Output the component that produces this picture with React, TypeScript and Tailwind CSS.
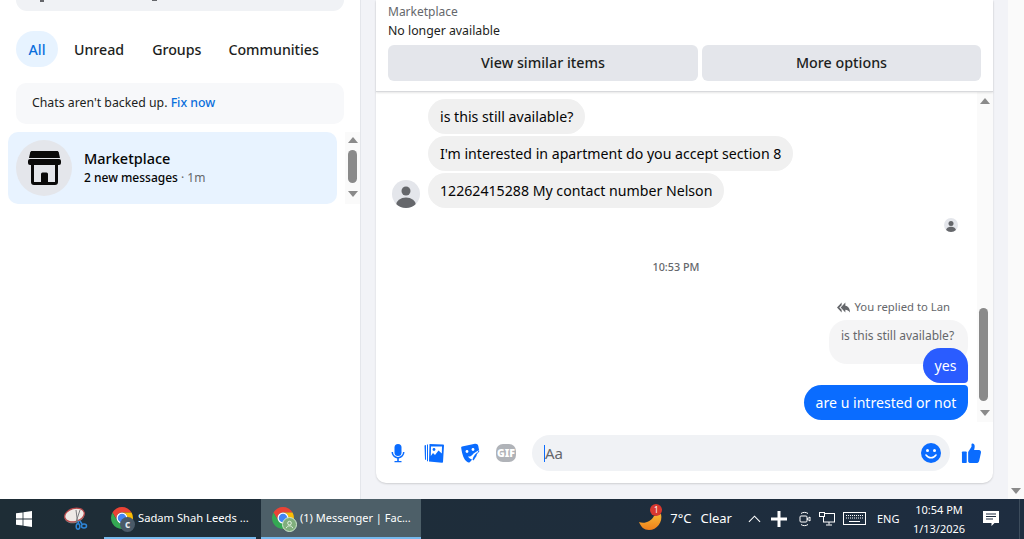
const FONT = "font-['Noto_Sans','Open_Sans',sans-serif]";

function ChromeIcon({ badge }: { badge: 'c' | 'user' }) {
  return (
    <div className="relative w-6 h-6 shrink-0">
      <svg viewBox="0 0 48 48" className="w-6 h-6">
        <path d="M43.050 13A22 22 0 0 0 4.950 13L14.500 29.500A11 11 0 0 1 24 13z" fill="#ea4335" />
        <path d="M24 46A22 22 0 0 0 43.050 13L24 13A11 11 0 0 1 33.500 29.500z" fill="#fbbc04" />
        <path d="M4.950 13A22 22 0 0 0 24 46L33.500 29.500A11 11 0 0 1 14.500 29.500z" fill="#34a853" />
        <circle cx="24" cy="24" r="11" fill="#fff" />
        <circle cx="24" cy="24" r="8.500" fill="#4285f4" />
      </svg>
      {badge === 'c' ? (
        <div className="absolute -right-[1px] -bottom-[2px] w-[15px] h-[15px] rounded-full bg-[#4a5a68] text-[10px] leading-[14px] text-center font-bold text-[#e6eaee]">
          c
        </div>
      ) : (
        <div className="absolute -right-[2px] -bottom-[2px] w-[15px] h-[15px] rounded-full bg-[#7fae7c] border border-[#cfe8cd] flex items-center justify-center">
          <svg viewBox="0 0 12 12" className="w-[11px] h-[11px]" fill="none" stroke="#eaf5e9" strokeWidth="1">
            <circle cx="6" cy="4.500" r="2" />
            <path d="M2.500 10c.5-2 2-2.500 3.500-2.500s3 .5 3.500 2.500" />
          </svg>
        </div>
      )}
    </div>
  );
}

function Arrow({ dir }: { dir: 'up' | 'down' }) {
  return (
    <svg viewBox="0 0 10 6" className="w-[10px] h-[6px] shrink-0" fill="#8a8a8a">
      {dir === 'up' ? <path d="M5 0l5 6H0z" /> : <path d="M0 0h10L5 6z" />}
    </svg>
  );
}

function StoreIcon() {
  return (
    <svg viewBox="0 0 33 34" className="w-[33px] h-[34px]" fill="#0a0a0a">
      <path d="M4 0h25c1 0 1.500.6 1.800 1.500L32 7H1l1.200-5.500C2.500.6 3 0 4 0z" />
      <rect x="0" y="8" width="33" height="6" rx="2" />
      <path d="M3 13h3v18h7v-8a1.500 1.500 0 0 1 1.500-1.500h4A1.500 1.500 0 0 1 20 23v8h7V13h3v18a3 3 0 0 1-3 3H6a3 3 0 0 1-3-3z" />
    </svg>
  );
}

function Sidebar() {
  return (
    <div className="w-[361px] shrink-0 bg-white border-r border-[#e4e6eb] flex flex-col">
      <div className="mx-4 w-[328px] h-[11px] bg-[#f0f2f5] rounded-b-[14px] shrink-0 flex items-start">
        <div className="ml-[24px] w-[4px] h-[2px] bg-[#65676b]" />
        <div className="ml-[108px] w-[5px] h-[1px] bg-[#65676b]" />
      </div>
      <div className="flex items-center px-4 mt-5 text-[14.200px] font-medium text-[#1c1e21]">
        <div className="w-[42px] h-9 pt-px rounded-[18px] bg-[#e7f3ff] text-[#0a6fdc] flex items-center justify-center">All</div>
        <div className="ml-4 pt-0.5">Unread</div>
        <div className="ml-7 pt-0.5">Groups</div>
        <div className="ml-[27px] pt-0.5">Communities</div>
      </div>
      <div className="mx-4 w-[328px] h-[41px] mt-4 bg-[#f7f8fa] rounded-[10px] px-4 flex items-center text-[12.300px] text-[#1c1e21]">
        Chats aren't backed up.&nbsp;<span className="text-[#0a6fdc] font-medium">Fix now</span>
      </div>
      <div className="flex mt-2 ml-2">
        <div className="w-[329px] h-[72px] rounded-[10px] bg-[#e8f3ff] flex items-center pl-2">
          <div className="w-14 h-14 rounded-full bg-[#e4e6eb] flex items-center justify-center">
            <StoreIcon />
          </div>
          <div className="ml-3 -mt-0.5">
            <div className="text-[14.500px] leading-[20px] font-medium text-[#050505]">Marketplace</div>
            <div className="text-[12px] leading-[16px] font-medium text-[#050505] mt-0.5 whitespace-nowrap">
              2 new messages<span className="text-[#65676b] font-normal"> · 1m</span>
            </div>
          </div>
        </div>
        <div className="w-[15px] ml-2 h-[72px] bg-[#fafafa] flex flex-col items-center pt-[5px]">
          <Arrow dir="up" />
          <div className="w-[9px] h-[33px] mt-[7px] rounded-full bg-[#8a8a8a]" />
          <div className="mt-2">
            <Arrow dir="down" />
          </div>
        </div>
      </div>
    </div>
  );
}

function Bubble({ text }: { text: string }) {
  return (
    <div className="w-fit h-[35px] rounded-[18px] bg-[#f0f0f0] px-3 flex items-center text-[14.150px] text-[#050505]">{text}</div>
  );
}

function Messages() {
  return (
    <div className="flex-1 flex min-h-0">
      <div className="flex-1 pr-2 relative overflow-hidden">
        <div className="pl-[52px] flex flex-col gap-[2px]">
          <div className="h-[5px] overflow-hidden pl-3 text-[11px] leading-4 text-[#65676b]">
            <div className="-mt-[13px]">Lan</div>
          </div>
          <Bubble text="is this still available?" />
          <Bubble text="I'm interested in apartment do you accept section 8" />
          <Bubble text="12262415288 My contact number Nelson" />
        </div>
        <div className="absolute left-4 top-[88px] w-7 h-7 rounded-full bg-[#e4e6eb] overflow-hidden">
          <svg viewBox="0 0 28 28" className="w-7 h-7" fill="#65676b">
            <circle cx="14" cy="11" r="4.500" />
            <ellipse cx="14" cy="25" rx="10" ry="7.500" />
          </svg>
        </div>
        <div className="flex justify-end pr-[11px] mt-[10px]">
          <div className="w-[14px] h-[14px] rounded-full bg-[#e4e6eb] overflow-hidden">
            <svg viewBox="0 0 28 28" className="w-[14px] h-[14px]" fill="#65676b">
              <circle cx="14" cy="11" r="5" />
              <ellipse cx="14" cy="25" rx="10" ry="7.500" />
            </svg>
          </div>
        </div>
        <div className="text-center text-[10.800px] font-medium text-[#65676b] mt-[27px] leading-4 pl-[7px]">10:53 PM</div>
        <div className="flex flex-col items-end pr-[1px] mt-[24px]">
          <div className="flex items-center text-[11.300px] text-[#65676b] leading-4 pr-[18px]">
            <svg viewBox="0 0 14 11" className="w-[13px] h-[11px] mr-[4px]" fill="#65676b">
              <path d="M5 0 0 5.500 5 11V8L2.500 5.500 5 3zM9 0 4 5.500 9 11V7.800c2 0 3.500.8 5 3.200 0-4-1.500-7-5-7.500z" />
            </svg>
            You replied to Lan
          </div>
          <div className="mt-[5px] h-[44px] w-[139px] rounded-[18px] bg-[#f5f5f6] pl-3 pt-2 text-[12px] leading-4 text-[#65676b]">
            is this still available?
          </div>
          <div className="-mt-4 w-[45px] h-[35px] bg-[#2a5cff] rounded-t-[18px] rounded-bl-[18px] rounded-br-[4px] text-white text-[14.100px] flex items-center justify-center relative">
            yes
          </div>
          <div className="mt-[2px] w-[164px] h-[35px] bg-[#0a6cff] rounded-l-[18px] rounded-tr-[4px] rounded-br-[18px] text-white text-[14.100px] flex items-center justify-center">
            are u intrested or not
          </div>
        </div>
      </div>
      <div className="w-4 h-[330px] bg-[#fafafa] flex flex-col items-center justify-between pt-[6px] pb-[6px] relative">
        <Arrow dir="up" />
        <div className="absolute top-[216px] left-[2px] w-[9px] h-[93px] rounded-full bg-[#8a8a8a]" />
        <Arrow dir="down" />
      </div>
    </div>
  );
}

function Composer() {
  return (
    <div className="h-[60px] shrink-0 flex items-center pl-3">
      <div className="flex items-center gap-[16px] w-[144px]">
        <svg viewBox="0 0 20 20" className="w-5 h-5" fill="#0a6cff">
          <rect x="6.500" y="1" width="7" height="12" rx="3.500" />
          <path d="M3.500 9h1.500a5 5 0 0 0 10 0h1.500a6.500 6.500 0 0 1-5.700 6.400V18h2.700v1.200H6.500V18h2.700v-2.600A6.500 6.500 0 0 1 3.500 9z" />
        </svg>
        <svg viewBox="0 0 20 20" className="w-5 h-5" fill="#0a6cff">
          <path d="M.5 2.500 2 2v15l-1-.5z" />
          <path d="M3 1.500h1v17l-1-.5z" />
          <path d="M5.500 1 19 1.500c.5 0 1 .5 1 1L19 19c0 .5-.5.8-1 .8L5 18.500z" />
          <path d="M7 3.500h11l-.2 7-3.300-3-3.500 4.500-2-2L6.800 13z" fill="#fff" />
          <circle cx="10" cy="6.500" r="1.400" fill="#0a6cff" />
        </svg>
        <svg viewBox="0 0 20 20" className="w-5 h-5">
          <path d="M2 3.500 15 .8c1.500-.2 3 .6 3.300 2.200l1 5.500L10 19c-1 .8-2 .6-3-.2C4 16.500 2.200 12 1.200 5c-.1-.7.2-1.300.8-1.500z" fill="#0a6cff" />
          <circle cx="7" cy="8.500" r="1.400" fill="#fff" />
          <circle cx="13" cy="6.500" r="1.400" fill="#fff" />
          <path d="M8 13.500c2 .5 4-.8 5.500-3L19 7l-6 10c-2.500-.8-4.200-2-5-3.500z" fill="#fff" />
          <path d="M12.500 16.500c.5-2.500 2-4.500 4.500-7l-.5 3.500-3 4.500z" fill="#0a6cff" />
        </svg>
        <div className="w-5 h-[18px] rounded-[7px] bg-[#b0b3b8] text-white text-[10.500px] font-black leading-[18px] text-center">GIF</div>
      </div>
      <div className="w-[418px] h-9 rounded-[18px] bg-[#f0f2f5] flex items-center pl-3 pr-[9px]">
        <div className="w-[1px] h-[17px] bg-[#0a6cff]" />
        <div className="text-[15px] text-[#65676b] flex-1">Aa</div>
        <svg viewBox="0 0 20 20" className="w-5 h-5">
          <circle cx="10" cy="10" r="10" fill="#0a6cff" />
          <circle cx="6.500" cy="7.500" r="1.500" fill="#fff" />
          <circle cx="13.500" cy="7.500" r="1.500" fill="#fff" />
          <path d="M5 12c1.300 2 3 2.800 5 2.800s3.700-.8 5-2.800" fill="none" stroke="#fff" strokeWidth="1.500" strokeLinecap="round" />
        </svg>
      </div>
      <svg viewBox="0 0 22 22" className="w-[21px] h-[21px] ml-[11px]" fill="#0a6cff">
        <rect x="1" y="9" width="5" height="12" rx="0.800" />
        <path d="M7.500 9.500 11 4V1.500c0-1 1.800-1.200 2.700-.2 1 1.200.8 3.500 0 6h5c1.800 0 2.600 1.500 2.200 3l-1.800 8c-.4 1.800-1.500 2.700-3.200 2.700H10c-1.500 0-2.500-1-2.500-2z" />
      </svg>
    </div>
  );
}

function Chat() {
  return (
    <div className="flex-1 bg-[#f2f3f7] pl-[15px] pr-[15px]">
      <div className="w-[617px] h-[483px] bg-white rounded-b-[10px] shadow-[0_1px_2px_rgba(0,0,0,0.15)] flex flex-col">
        <div className="h-[92px] shrink-0 border-b border-[#d8d9dc] shadow-[0_1px_2px_rgba(0,0,0,0.1)] px-3 pt-1 relative z-10 bg-white">
          <div className="text-[12px] leading-[16px] text-[#65676b]">Marketplace</div>
          <div className="text-[12.300px] leading-[18px] mt-[2px] text-[#1c1e21]">No longer available</div>
          <div className="flex gap-1 mt-[5px] text-[14.300px] font-medium text-[#1c1e21]">
            <div className="w-[310px] h-9 rounded-md bg-[#e4e6eb] flex items-center justify-center">View similar items</div>
            <div className="w-[279px] h-9 rounded-md bg-[#e4e6eb] flex items-center justify-center">More options</div>
          </div>
        </div>
        <Messages />
        <Composer />
      </div>
    </div>
  );
}

function Taskbar() {
  return (
    <div className="h-10 shrink-0 bg-linear-to-r from-[#1e2d36] to-[#1e2d40] flex items-center text-white">
      <div className="w-[48px] flex justify-center">
        <svg viewBox="0 0 16 16" className="w-4 h-4" fill="#fff">
          <path d="M0 2.300 6.600 1.400v6.200H0zM7.400 1.300 16 0v7.600H7.400zM0 8.400h6.600v6.200L0 13.700zM7.400 8.400H16V16l-8.600-1.200z" />
        </svg>
      </div>
      <div className="w-[56px] flex justify-center">
        <svg viewBox="0 0 24 24" className="w-6 h-6">
          <ellipse cx="10.500" cy="9.500" rx="10" ry="6.500" transform="rotate(-15 10.500 9.500)" fill="#8c8c8c" />
          <ellipse cx="10.500" cy="8" rx="10" ry="6.500" transform="rotate(-15 10.500 8)" fill="#efeae6" stroke="#b9494b" strokeWidth="1.300" />
          <path d="M12 3l1.500 12M16 3l-4 12" stroke="#7d7d80" strokeWidth="1" />
          <path d="M14.500 14l-.5 3M16 14l2 3" stroke="#2f86d8" strokeWidth="1.500" />
          <ellipse cx="14" cy="19.500" rx="1.800" ry="2.700" fill="none" stroke="#2f86d8" strokeWidth="1.500" />
          <ellipse cx="20" cy="19" rx="2.500" ry="2" fill="none" stroke="#2f86d8" strokeWidth="1.500" />
        </svg>
      </div>
      <div className="w-[152px] h-10 flex items-center pl-[6px] border-b-2 border-[#76b9ed]">
        <ChromeIcon badge="c" />
        <span className="ml-[4px] text-[11.200px] whitespace-nowrap">Sadam Shah Leeds ...</span>
      </div>
      <div className="w-[160px] h-10 ml-[5px] flex items-center pl-[10px] bg-[#4d5f68] border-b-2 border-[#76b9ed]">
        <ChromeIcon badge="user" />
        <span className="ml-[5px] text-[11px] whitespace-nowrap">(1) Messenger | Fac...</span>
      </div>
      <div className="ml-auto flex items-center h-10">
        <div className="relative w-6 h-6">
          <svg viewBox="0 0 24 24" className="w-6 h-6">
            <defs>
              <linearGradient id="moon" x1="0" y1="0" x2="0" y2="1">
                <stop offset="0" stopColor="#f7b733" />
                <stop offset="1" stopColor="#ee7f1b" />
              </linearGradient>
            </defs>
            <path d="M0 15C5 17 12 15 15 9L22 7C24 15 18 23 10 23 5 23 2 20 0 15z" fill="url(#moon)" />
          </svg>
          <div className="absolute left-[11px] -top-[3px] w-[12px] h-[12px] rounded-full bg-[#d8382f] text-[8px] leading-[12px] text-center">1</div>
        </div>
        <span className="ml-[7px] text-[13px]">7°C</span>
        <span className="ml-[9px] text-[13px]">Clear</span>
        <svg viewBox="0 0 14 8" className="w-[13px] h-[8px] ml-[16px]" fill="none" stroke="#fff" strokeWidth="1.200">
          <path d="M1 7l6-6 6 6" />
        </svg>
        <svg viewBox="0 0 16 16" className="w-4 h-4 ml-[10px]" fill="#fff">
          <path d="M6.500 0h3v6.500H16v3H9.500V16h-3V9.500H0v-3h6.500z" />
        </svg>
        <svg viewBox="0 0 12 16" className="w-[12px] h-4 ml-[12px]" fill="none" stroke="#fff" strokeWidth="1">
          <rect x="1" y="5" width="7" height="6" rx="1" />
          <path d="M8 8l3-2v4zM2 2.500c2-1.500 5-1.500 7 0M2 13.500c2 1.500 5 1.500 7 0" />
        </svg>
        <svg viewBox="0 0 16 14" className="w-4 h-[14px] ml-[8px]" fill="none" stroke="#fff" strokeWidth="1">
          <rect x="4.500" y="1.500" width="11" height="8.500" />
          <rect x="0.500" y="0.500" width="5" height="4" fill="#1e2d3e" />
          <path d="M10 10v2.500M7 13h6" />
        </svg>
        <svg viewBox="0 0 24 14" className="w-6 h-[14px] ml-[8px]" fill="none" stroke="#fff" strokeWidth="1">
          <rect x="0.500" y="0.500" width="22" height="12" />
          <path d="M3 3.500h17M3 6h17" strokeDasharray="1 1" />
          <path d="M6 9.500h11" />
        </svg>
        <span className="ml-[10px] text-[11px] w-[26px]">ENG</span>
        <div className="ml-[8px] w-[58px] pr-[2px] text-center text-[11px] leading-[19px]">
          <div>10:54 PM</div>
          <div>1/13/2026</div>
        </div>
        <div className="w-[44px] flex justify-center">
          <svg viewBox="0 0 16 16" className="w-4 h-4" fill="#fff">
            <path d="M0 0h16v12h-4.500l-3 3v-3H0z" />
            <path d="M3 3h10M3 5.500h10M3 8h7" stroke="#1e2d40" strokeWidth="1" />
          </svg>
        </div>
        <div className="ml-[6px] mr-1 w-[1px] h-10 bg-[#3d4c5c]" />
      </div>
    </div>
  );
}

export default function App() {
  return (
    <div className={`w-[1024px] h-[539px] flex flex-col overflow-hidden ${FONT}`}>
      <div className="flex-1 flex min-h-0">
        <Sidebar />
        <Chat />
        <div className="w-[16px] shrink-0 bg-[#fafafa] flex flex-col justify-end items-center pb-[5px]">
          <Arrow dir="down" />
        </div>
      </div>
      <Taskbar />
    </div>
  );
}
